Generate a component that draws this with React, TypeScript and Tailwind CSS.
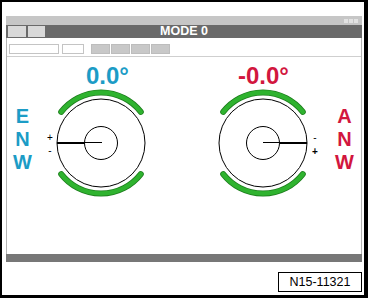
import React from "react";

const GREEN = "#2fb32f";
const GREEN_DARK = "#1d7d1d";

function Gauge({ side }: { side: "left" | "right" }) {
  const cx = 55;
  const cy = 55;
  const r = 50.5;
  const dx = 39.8;
  const dy = 31.1;
  const top = `M ${cx - dx} ${cy - dy} A ${r} ${r} 0 0 1 ${cx + dx} ${cy - dy}`;
  const bot = `M ${cx - dx} ${cy + dy} A ${r} ${r} 0 0 0 ${cx + dx} ${cy + dy}`;
  return (
    <svg width="110" height="112" viewBox="0 0 110 112" className="block overflow-visible">
      {[top, bot].map((d, i) => (
        <g key={i}>
          <path d={d} fill="none" stroke={GREEN_DARK} strokeWidth="6" strokeLinecap="round" />
          <path d={d} fill="none" stroke={GREEN} strokeWidth="4.4" strokeLinecap="round" />
        </g>
      ))}
      <circle cx={cx} cy={cy} r="44" fill="none" stroke="#000" strokeWidth="1" />
      <circle cx={cx} cy={cy} r="16.5" fill="none" stroke="#000" strokeWidth="1" />
      {side === "left" ? (
        <>
          <line x1="11" y1="55" x2="39" y2="55" stroke="#000" strokeWidth="2" />
          <line x1="39" y1="54.5" x2="56" y2="54.5" stroke="#000" strokeWidth="1" />
          <text x="4" y="53" fontSize="10" fontFamily="'Liberation Sans', Arial, sans-serif" textAnchor="middle" fill="#000">+</text>
          <text x="4" y="66" fontSize="10" fontFamily="'Liberation Sans', Arial, sans-serif" textAnchor="middle" fill="#000">-</text>
        </>
      ) : (
        <>
          <line x1="72" y1="55" x2="99" y2="55" stroke="#000" strokeWidth="2" />
          <line x1="55" y1="54.5" x2="72" y2="54.5" stroke="#000" strokeWidth="1" />
          <text x="107" y="53" fontSize="10" fontFamily="'Liberation Sans', Arial, sans-serif" textAnchor="middle" fill="#000">-</text>
          <text x="107" y="67" fontSize="10" fontWeight="bold" fontFamily="'Liberation Sans', Arial, sans-serif" textAnchor="middle" fill="#000">+</text>
        </>
      )}
    </svg>
  );
}

export default function App() {
  return (
    <div className="w-[369px] h-[298px] bg-white" style={{ fontFamily: "'Liberation Sans', Arial, sans-serif" }}>
      <div className="w-[368px] h-[298px] border-t-2 border-l-2 border-r-4 border-b-[3px] border-black flex flex-col">
        {/* window */}
        <div className="mt-[14px] ml-[4px] w-[356px] flex flex-col">
          {/* title strip */}
          <div className="h-[9px] bg-[#c6c6c6] flex items-center justify-end pr-[4px] gap-[1px]">
            <div className="w-[4px] h-[4px] bg-[#e2e2e2]" />
            <div className="w-[4px] h-[4px] bg-[#e2e2e2]" />
            <div className="w-[4px] h-[4px] bg-[#e2e2e2]" />
          </div>
          {/* dark bar */}
          <div className="h-[13px] bg-[#6a6a6a] grid grid-cols-[1fr_auto_1fr] items-center">
            <div className="flex gap-[2px] pl-[2px]">
              <div className="w-[18px] h-[11px] bg-[#d9d9d9]" />
              <div className="w-[17px] h-[11px] bg-[#d9d9d9]" />
            </div>
            <div className="text-white font-bold text-[12.5px] leading-none">MODE 0</div>
            <div />
          </div>
          {/* content */}
          <div className="h-[216px] bg-white border-l border-r border-[#b4b4b4] flex flex-col">
            <div className="h-[19px] border-b border-[#cfcfcf] flex items-start pt-[6px] pl-[2px]">
              <div className="w-[50px] h-[10px] border border-[#c4c4c4] bg-white" />
              <div className="ml-[3px] w-[22px] h-[10px] border border-[#c4c4c4] bg-white" />
              <div className="ml-[7px] flex gap-[1px]">
                <div className="w-[19px] h-[10px] bg-[#c8c8c8] border border-[#bdbdbd]" />
                <div className="w-[19px] h-[10px] bg-[#c8c8c8] border border-[#bdbdbd]" />
                <div className="w-[19px] h-[10px] bg-[#c8c8c8] border border-[#bdbdbd]" />
                <div className="w-[19px] h-[10px] bg-[#c8c8c8] border border-[#bdbdbd]" />
              </div>
            </div>
            <div className="flex-1 flex items-start">
              <div className="ml-[5px] w-[21px] mt-[48px] flex flex-col items-center text-[20px] leading-[23px] font-bold text-[#1c9cc6]">
                <span>E</span>
                <span>N</span>
                <span>W</span>
              </div>
              <div className="ml-[13px] w-[110px] pt-[7px] flex flex-col">
                <div className="pl-[40px] text-[24px] leading-[24px] font-bold text-[#1c9cc6] whitespace-nowrap">0.0°</div>
                <Gauge side="left" />
              </div>
              <div className="ml-[52px] w-[110px] pt-[7px] flex flex-col">
                <div className="pl-[30px] text-[24px] leading-[24px] font-bold text-[#d2163e] whitespace-nowrap">-0.0°</div>
                <Gauge side="right" />
              </div>
              <div className="ml-[16px] w-[21px] mt-[48px] flex flex-col items-center text-[20px] leading-[23px] font-bold text-[#d2163e]">
                <span>A</span>
                <span>N</span>
                <span>W</span>
              </div>
            </div>
          </div>
          {/* bottom bar */}
          <div className="h-[8px] bg-[#777777]" />
        </div>
        {/* badge */}
        <div className="mt-[10px] ml-[276px] w-[84px] h-[20px] border border-black flex items-center justify-center text-[12.5px] text-black leading-none">
          N15-11321
        </div>
      </div>
    </div>
  );
}
